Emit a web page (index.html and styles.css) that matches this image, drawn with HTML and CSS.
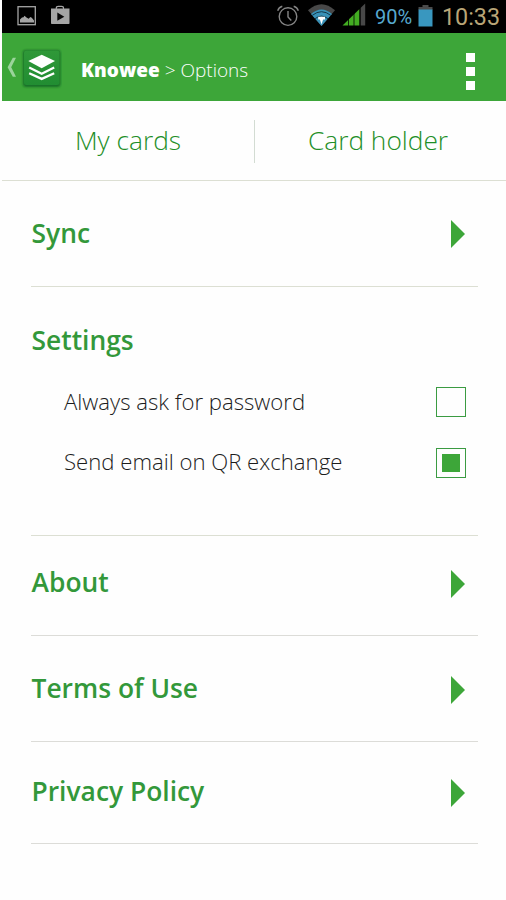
FILE: index.html
```html
<!DOCTYPE html>
<html lang="en">
<head>
<meta charset="utf-8">
<title>Knowee</title>
<link rel="stylesheet" href="styles.css">
</head>
<body>
<div class="app">
  <div class="status">
    <svg class="notifications" width="48" height="33" viewBox="2 0 48 33">
      <rect x="18" y="6.700" width="17.300" height="18" fill="none" stroke="#a5a5a5" stroke-width="1.300"/>
      <path d="M20 22.500v-3l2-2 1.500-.3 1-1.500 2 1.800 2.200 1.200 1.600-1.700 1.500.8 2.200 2.700v2z" fill="#a5a5a5"/>
    </svg>
    <svg class="store" width="20" height="33" viewBox="0 0 20 33">
      <path d="M1 8.500h18.500v14.700q0 .8-.8.8H1.800q-.8 0-.8-.8z" fill="#a5a5a5"/>
      <path d="M6.300 9V8q0-1.700 2-1.700h3.200q2 0 2 1.700v1" fill="none" stroke="#a5a5a5" stroke-width="1.200"/>
      <path d="M7.300 12.600v8.200l7-4.100z" fill="#080808"/>
    </svg>
    <svg class="signals" width="92" height="33" viewBox="276 0 92 33">
      <g fill="none" stroke="#858585" stroke-width="1.400">
        <circle cx="288" cy="16.600" r="8.800"/>
        <path d="M288 11v6l3.300 3.500M277.700 10.700q1-3.600 4.600-4.500M298.300 10.700q-1-3.600-4.600-4.500"/>
      </g>
      <path d="M308 10.300Q321.500-2 335 10.300L321.500 26z" fill="#484848"/>
      <path d="M311 14Q321.500 5 332 14L321.500 26z" fill="#3992b8"/>
      <path d="M312.200 15.400Q321.500 8 330.800 15.400" fill="none" stroke="#153849" stroke-width="1"/>
      <path d="M315 18.700Q321.500 13.500 328 18.700" fill="none" stroke="#153849" stroke-width="1"/>
      <path d="M318.200 16.700h6.800v2.800h-1.900l-1.600 5-1.600-5h-1.700z" fill="#fff"/>
      <path d="M342.500 25.500l17-16.500v16.500z" fill="#43ad22"/>
      <path d="M360.500 8l4.700-4.500v22h-4.700z" fill="#484848"/>
      <path d="M348.500 15v11M354 10v16M360 5v21" stroke="#000" stroke-width=".8"/>
    </svg>
    <span class="percent">90%</span>
    <svg class="battery" width="15" height="33" viewBox="0 0 15 33">
      <path d="M4.500 5h6v2h4v3H.5V7h4z" fill="#4b4b4b"/>
      <path d="M.5 9.500h14v17H.5z" fill="#3997bf"/>
    </svg>
    <span class="clock">10:33</span>
  </div>
  <header class="bar">
    <svg class="logo" width="58" height="60" viewBox="4 38 58 60">
      <defs>
        <linearGradient id="tile" x1="0" y1="0" x2="0" y2="1"><stop stop-color="#2f9838"/><stop offset="1" stop-color="#218d32"/></linearGradient>
        <filter id="soft" x="-20%" y="-20%" width="140%" height="140%"><feGaussianBlur stdDeviation=".8"/></filter>
      </defs>
      <path d="M16 57.700h-3.200L7.600 67.200l5.200 9.500H16L11.200 67.200z" fill="#9bd49b"/>
      <rect x="23" y="50" width="37.500" height="37" rx="3" fill="#176d27" filter="url(#soft)"/>
      <rect x="24" y="50.500" width="35.500" height="34.500" rx="2.500" fill="url(#tile)"/>
      <path d="M41.700 54.800l13.300 6.200-13.300 7.200L28.300 61z" fill="#fff"/>
      <path d="M29.200 67.500l12.500 6.200 12.500-6.200M29.200 73.200l12.500 5.700 12.500-5.700" fill="none" stroke="#fff" stroke-width="2.300"/>
    </svg>
    <div class="crumbs"><b class="brand">Knowee</b><span class="here">&gt; Options</span></div>
    <div class="more"><i></i><i></i><i></i></div>
  </header>
  <nav class="tabs">
    <div class="tab"><span class="cards">My cards</span></div>
    <div class="tab"><span class="holder">Card holder</span></div>
  </nav>
  <main class="list">
    <section class="row sync"><h2>Sync</h2><i class="arrow"></i></section>
    <section class="settings">
      <h2>Settings</h2>
      <div class="option"><span class="ask">Always ask for password</span><i class="check"></i></div>
      <div class="option"><span class="send">Send email on QR exchange</span><i class="check on"></i></div>
    </section>
    <section class="row about"><h2>About</h2><i class="arrow"></i></section>
    <section class="row terms"><h2>Terms of Use</h2><i class="arrow"></i></section>
    <section class="row privacy"><h2>Privacy Policy</h2><i class="arrow"></i></section>
  </main>
</div>
</body>
</html>
```
FILE: styles.css
```css
* { box-sizing: border-box; }
body { margin: 0; background: #fefefe; font-family: "Open Sans", sans-serif; }
.app { padding-left: 2px; height: 900px; overflow: hidden; white-space: nowrap; }
.status { display: flex; height: 33px; background: #000; font-family: Roboto, sans-serif; }
.status svg { flex: none; }
.signals { margin-left: 206px; }
.percent { width: 37px; margin-left: 7px; font-size: 20px; line-height: 34px; color: #57a9cf; }
.battery { margin-left: 6px; }
.clock { margin-left: 9px; font-size: 23.300px; line-height: 34px; color: #b9a577; }
.bar { display: flex; height: 67.500px; background: #3da639; color: #fff; }
.logo { flex: none; margin: 5px 0 0 2px; }
.crumbs { margin-left: 19px; line-height: 75px; font-size: 19px; }
.brand { font-weight: 800; }
.here { margin-left: 5px; font-weight: 300; }
.more { display: grid; gap: 5.500px; align-content: start; margin: 20px 31.500px 0 auto; }
.more i { width: 8.500px; height: 8.700px; background: #fff; }
.tabs { display: flex; height: 80.500px; border-bottom: 1px solid #dcdfd3; color: #1e8f28; font-size: 26.300px; font-weight: 300; line-height: 79px; }
.tab { width: 50%; text-align: center; }
.tab + .tab { padding-right: 4px; background: linear-gradient(#d3dcd3, #d3dcd3) 0 19px / 1px 43px no-repeat; }
.list { margin: 0 28px 0 29px; }
h2 { margin: 0 0 0 .5px; font-size: 26.400px; font-weight: 600; line-height: 36px; color: #33983a; }
.row { display: flex; justify-content: space-between; border-bottom: 1px solid #dcdcd8; }
.arrow { width: 14px; height: 28px; margin: 6px 13px 0 0; background: #3da639; clip-path: polygon(0 0, 100% 50%, 0 100%); }
.sync { height: 106px; padding-top: 34px; border-color: #dcdfd3; }
.sync .arrow { margin-top: 5px; }
.settings { height: 249px; padding-top: 35px; border-bottom: 1px solid #dcdfd3; }
.option { display: flex; align-items: center; justify-content: space-between; height: 60.500px; padding: 0 12px 0 33px; font-size: 22.150px; font-weight: 300; line-height: 28px; color: #1c1c1c; }
.option span { margin-bottom: 3px; }
.settings h2 { margin-bottom: 14px; }
.check { width: 30px; height: 30px; border: 1px solid #3b9b42; }
.on { padding: 5px; background: #3da639 content-box; }
.about { height: 100px; padding-top: 28px; }
.terms { height: 106px; padding-top: 34px; }
.privacy { height: 102px; padding-top: 31px; }
```
